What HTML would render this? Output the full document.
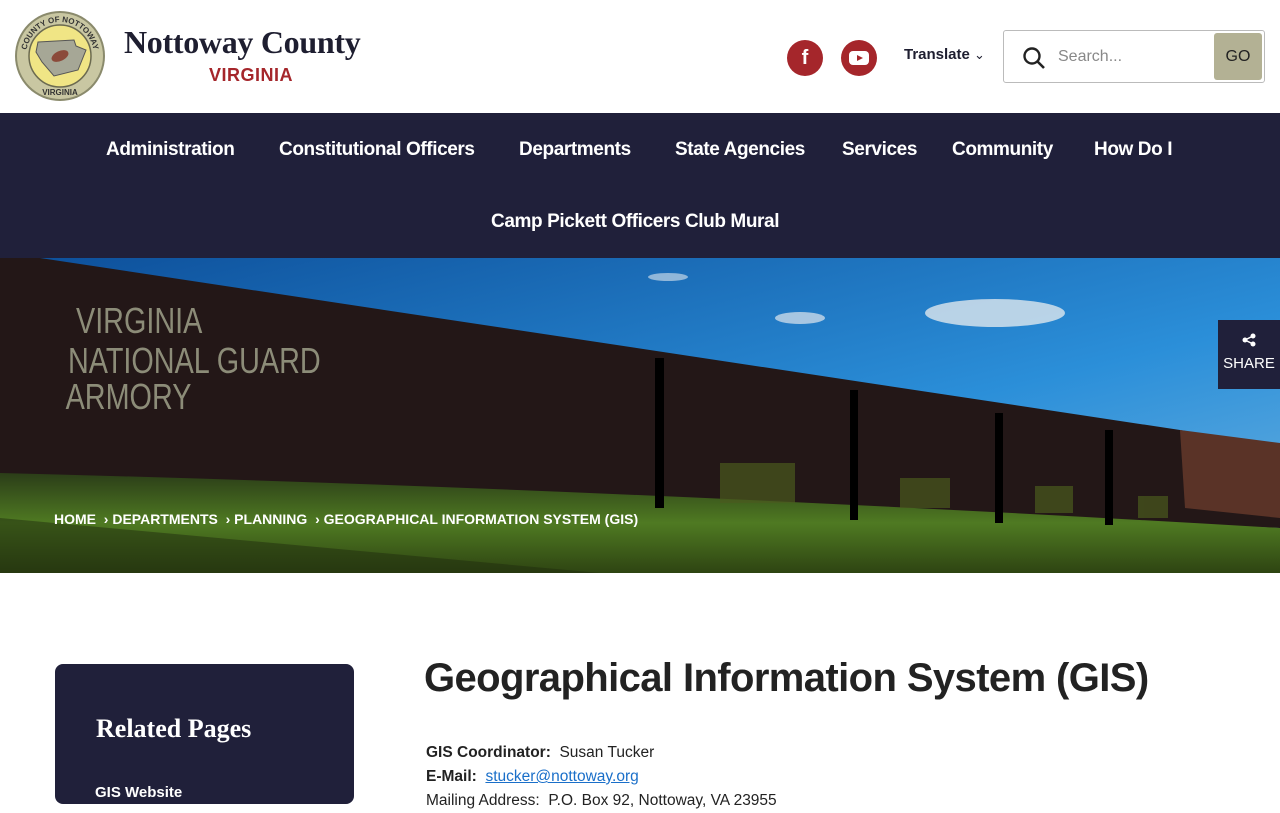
<!DOCTYPE html>
<html><head><meta charset="utf-8"><style>
*{margin:0;padding:0;box-sizing:border-box}
body{width:1280px;height:800px;overflow:hidden;background:#fff;font-family:"Liberation Sans",sans-serif}
.hdr{position:relative;height:113px}
.nav{position:absolute;top:113px;left:0;width:1280px;height:145px;background:#20203a;color:#fff;font-weight:bold;font-size:19px;letter-spacing:-0.4px}
.nav span{position:absolute;top:26px;white-space:nowrap}
.hero{position:absolute;top:258px;left:0;width:1280px;height:315px;overflow:hidden}
.bc{position:absolute;top:253px;left:54px;color:#fff;font-weight:bold;font-size:14px;white-space:nowrap}
.share{position:absolute;top:62px;right:0;width:62px;height:69px;background:#20203a;color:#fff;font-size:15px;text-align:center}
.side{position:absolute;top:664px;left:55px;width:299px;height:140px;background:#20203a;border-radius:8px;color:#fff}
h1{position:absolute;top:656px;left:424px;font-size:40px;color:#222;font-weight:bold;white-space:nowrap;letter-spacing:-0.6px}
.info{position:absolute;top:741px;left:426px;font-size:15.5px;color:#222;line-height:24px}
</style></head><body>
<div class="hdr">
<svg style="position:absolute;left:14px;top:10px" width="92" height="92" viewBox="0 0 92 92">
<circle cx="46" cy="46" r="45" fill="#8a8a6c"/><circle cx="46" cy="46" r="43" fill="#c9c7a2"/><circle cx="46" cy="46" r="31" fill="#f0e585" stroke="#6b6a50" stroke-width="1.5"/>
<path d="M24 32 L60 30 L62 36 L72 40 L64 60 L40 66 L28 52 L22 42Z" fill="#a6a796" stroke="#555" stroke-width="1"/>
<ellipse cx="46" cy="46" rx="9" ry="5" fill="#8b4a3a" transform="rotate(-25 46 46)"/>
<path id="arc" d="M12 46 A34 34 0 0 1 80 46" fill="none"/>
<text font-size="8" fill="#333" font-family="Liberation Sans" font-weight="bold"><textPath href="#arc" startOffset="50%" text-anchor="middle">COUNTY OF NOTTOWAY</textPath></text>
<text x="46" y="85" font-size="8" text-anchor="middle" fill="#333" font-family="Liberation Sans" font-weight="bold">VIRGINIA</text></svg>
<div style="position:absolute;left:124px;top:24px;font-family:'Liberation Serif',serif;font-weight:bold;font-size:32px;color:#1e1e30;letter-spacing:-0.3px">Nottoway County</div>
<div style="position:absolute;left:209px;top:65px;font-weight:bold;font-size:18px;color:#a5262b;letter-spacing:0.5px">VIRGINIA</div>
<div style="position:absolute;left:787px;top:40px;width:36px;height:36px;border-radius:50%;background:#a5262b;color:#fff;font-weight:bold;font-size:20px;text-align:center;line-height:36px">f</div>
<div style="position:absolute;left:841px;top:40px;width:36px;height:36px;border-radius:50%;background:#a5262b"><div style="position:absolute;left:8px;top:11px;width:20px;height:14px;background:#fff;border-radius:4px"></div><div style="position:absolute;left:16px;top:15px;border-left:6px solid #a5262b;border-top:3.5px solid transparent;border-bottom:3.5px solid transparent"></div></div>
<div style="position:absolute;left:904px;top:46px;font-weight:bold;font-size:15px;color:#1e1e30">Translate <span style="font-weight:normal;font-size:13px">&#8964;</span></div>
<div style="position:absolute;left:1003px;top:30px;width:262px;height:53px;border:1px solid #bbb;border-radius:3px">
<svg style="position:absolute;left:18px;top:15px" width="24" height="24" viewBox="0 0 24 24"><circle cx="10" cy="10" r="7.5" fill="none" stroke="#222" stroke-width="2.4"/><path d="M15.5 15.5 L22 22" stroke="#222" stroke-width="2.6"/></svg>
<div style="position:absolute;left:54px;top:17px;color:#888;font-size:16px">Search...</div>
<div style="position:absolute;right:2px;top:2px;width:48px;height:47px;background:#b3b194;border-radius:3px;text-align:center;line-height:47px;font-size:16px;color:#222">GO</div></div>
</div>
<div class="nav">
<span style="left:106px">Administration</span><span style="left:279px">Constitutional Officers</span><span style="left:519px">Departments</span><span style="left:675px">State Agencies</span><span style="left:842px">Services</span><span style="left:952px">Community</span><span style="left:1094px">How Do I</span>
<span style="left:491px;top:98px">Camp Pickett Officers Club Mural</span>
</div>
<div class="hero">
<svg width="1280" height="315" viewBox="0 0 1280 315">
<defs><linearGradient id="sky" x1="0" y1="0" x2="1" y2="1"><stop offset="0" stop-color="#0d4f9a"/><stop offset="0.6" stop-color="#2b8fd9"/><stop offset="1" stop-color="#6fb3e0"/></linearGradient>
<linearGradient id="gr" x1="0" y1="0" x2="0" y2="1"><stop offset="0" stop-color="#2b3d18"/><stop offset="0.5" stop-color="#4f7a22"/><stop offset="1" stop-color="#2e4412"/></linearGradient></defs>
<rect width="1280" height="315" fill="url(#sky)"/>
<path d="M0 0 L40 0 L1180 172 L1280 190 L1280 270 L0 220Z" fill="#231717"/>
<path d="M1180 172 L1280 185 L1280 260 L1185 250Z" fill="#5a3327"/>
<path d="M0 215 Q600 230 1280 270 L1280 315 L0 315Z" fill="url(#gr)"/>
<path d="M0 260 L600 315 L0 315Z" fill="#1f2c0e" opacity="0.5"/>
<g fill="#000"><rect x="655" y="100" width="9" height="150"/><rect x="850" y="132" width="8" height="130"/><rect x="995" y="155" width="8" height="110"/><rect x="1105" y="172" width="8" height="95"/></g>
<g fill="#4a5a1e" opacity="0.7"><rect x="720" y="205" width="75" height="40"/><rect x="900" y="220" width="50" height="30"/><rect x="1035" y="228" width="38" height="27"/><rect x="1138" y="238" width="30" height="22"/></g>
<ellipse cx="995" cy="55" rx="70" ry="14" fill="#dfe7ee" opacity="0.8"/><ellipse cx="800" cy="60" rx="25" ry="6" fill="#dfe7ee" opacity="0.7"/><ellipse cx="668" cy="19" rx="20" ry="4" fill="#dfe7ee" opacity="0.6"/>
<g fill="#8c8c78" font-family="Liberation Sans" font-size="36" transform="scale(0.8 1)"><text x="95" y="75">VIRGINIA</text><text x="85" y="115">NATIONAL GUARD</text><text x="82" y="151">ARMORY</text></g>
</svg>
<div class="bc">HOME &nbsp;›&nbsp;DEPARTMENTS &nbsp;›&nbsp;PLANNING &nbsp;›&nbsp;GEOGRAPHICAL INFORMATION SYSTEM (GIS)</div>
<div class="share"><svg style="margin-top:13px" width="14" height="14" viewBox="0 0 14 14"><circle cx="11" cy="3" r="2.5" fill="#fff"/><circle cx="3" cy="7" r="2.5" fill="#fff"/><circle cx="11" cy="11" r="2.5" fill="#fff"/><path d="M11 3L3 7L11 11" stroke="#fff" stroke-width="1.5" fill="none"/></svg><div style="margin-top:4px">SHARE</div></div>
</div>
<div class="side">
<div style="position:absolute;left:41px;top:50px;font-family:'Liberation Serif',serif;font-weight:bold;font-size:26px">Related Pages</div>
<div style="position:absolute;left:40px;top:120px;font-weight:bold;font-size:15px">GIS Website</div>
</div>
<h1>Geographical Information System (GIS)</h1>
<div class="info"><b>GIS Coordinator:</b>&nbsp; Susan Tucker<br><b>E-Mail:</b>&nbsp; <a style="color:#1a6fc9;text-decoration:underline">stucker@nottoway.org</a><br>Mailing Address:&nbsp; P.O. Box 92, Nottoway, VA 23955</div>
</body></html>
